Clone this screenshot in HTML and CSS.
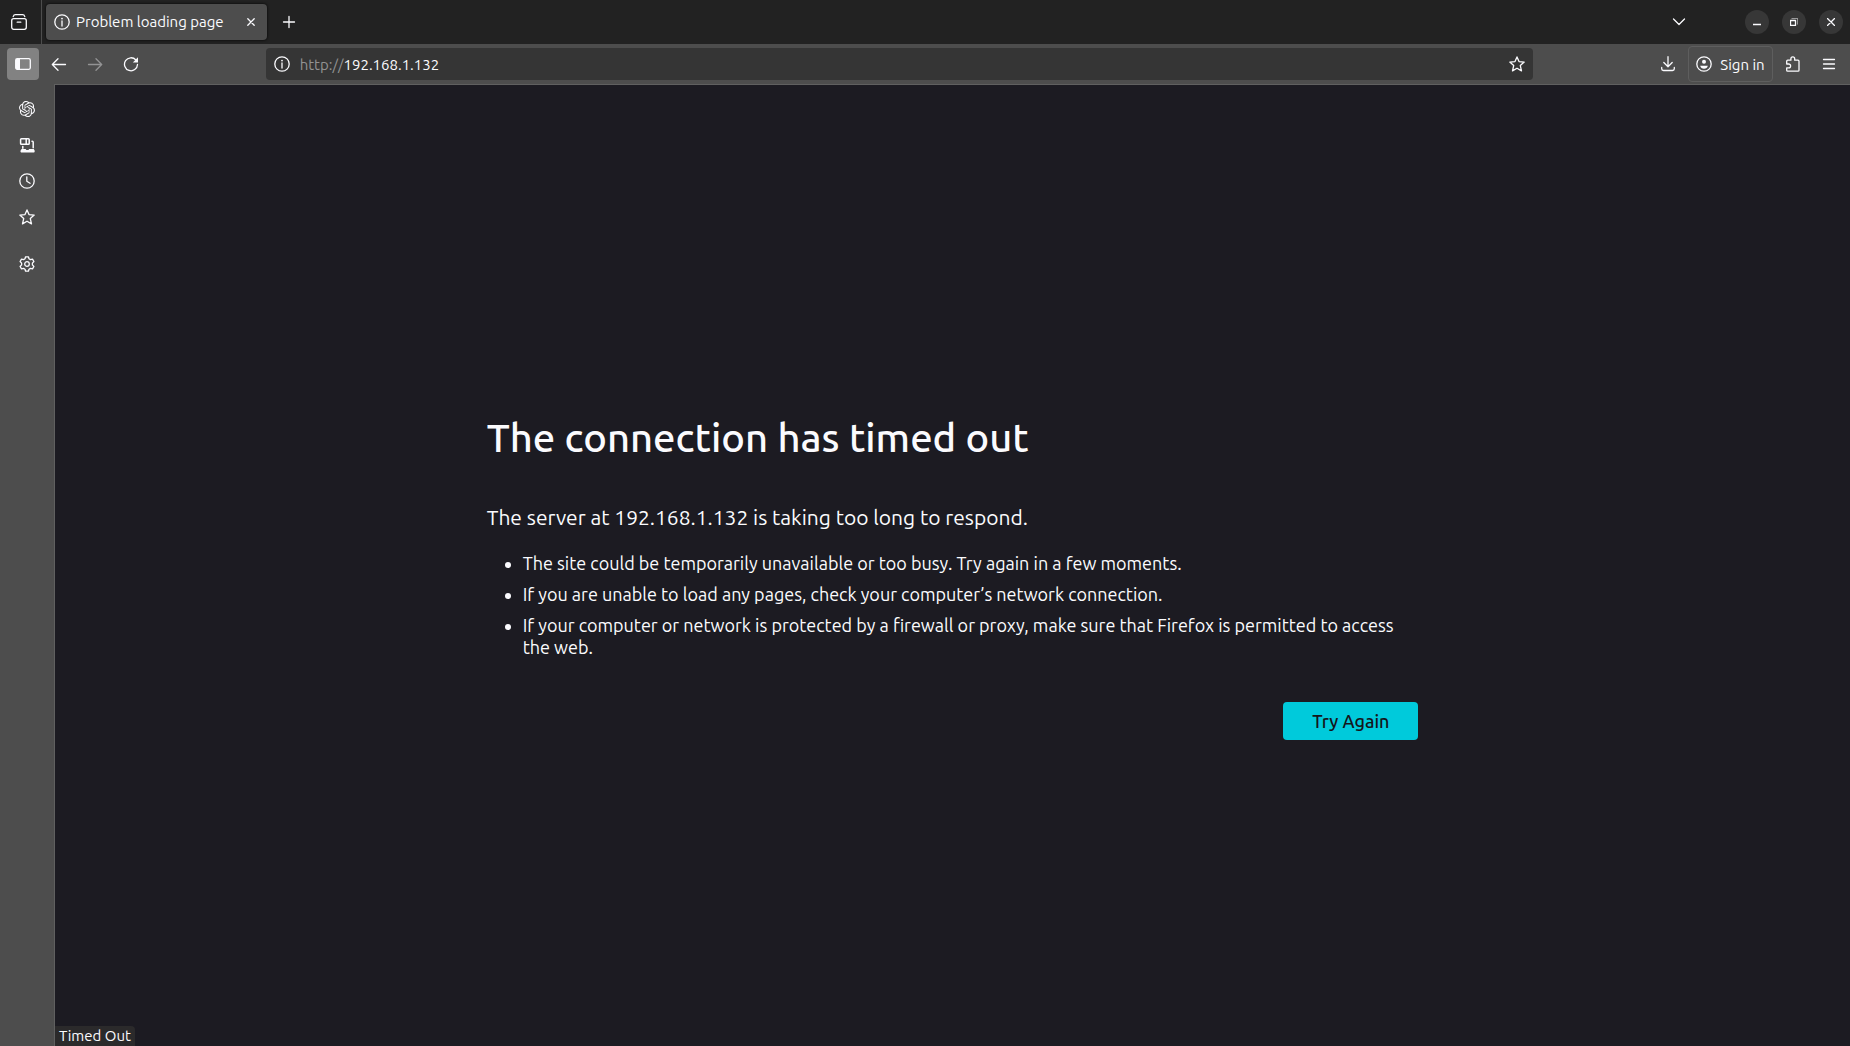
FILE: index.html
```html
<!DOCTYPE html>
<html lang="en">
<head>
<meta charset="utf-8">
<title>Problem loading page</title>
<link rel="stylesheet" href="styles.css">
</head>
<body>
<div class="browser">
  <header class="tabbar">
    <button class="view-button" aria-label="Firefox View">
      <svg class="icon" viewBox="0 0 16 16"><rect x=".7" y="4.7" width="14.6" height="10.6" rx="2"/><path d="M2.2 2.6C2.6 1.2 3.4.7 4.5.7h7c1.100 0 1.900.5 2.300 1.900M6.200 8.200h3.600"/></svg>
    </button>
    <div class="tab">
      <svg class="icon" viewBox="0 0 16 16"><circle cx="8" cy="8" r="7.200"/><path d="M8 7v5"/><circle class="solid" cx="8" cy="4.600" r=".9"/></svg>
      <span class="tab-title">Problem loading page</span>
      <button class="tab-close" aria-label="Close tab"><svg class="icon-small" viewBox="0 0 8 8"><path d="M.8.8l6.400 6.400M7.200.8L.8 7.200"/></svg></button>
    </div>
    <button class="tool" aria-label="New tab"><svg class="icon" viewBox="0 0 16 16"><path d="M8 2.500v11M2.500 8h11"/></svg></button>
    <div class="window-controls">
      <button class="tool tabs-list" aria-label="List all tabs"><svg class="icon" viewBox="0 0 16 16"><path d="M2.500 5L8 10.500 13.500 5"/></svg></button>
      <button class="round" aria-label="Minimize"><svg class="icon-small" viewBox="0 0 8 8"><path d="M0 6.500h8"/></svg></button>
      <button class="round" aria-label="Restore"><svg class="icon-small" viewBox="0 0 8 8"><path d="M.5 2.500h5v5h-5z"/><path class="faint" d="M2 .3h5.700V6"/></svg></button>
      <button class="round" aria-label="Close"><svg class="icon-small" viewBox="0 0 8 8"><path d="M.4.4l7.200 7.200M7.600.4L.4 7.600"/></svg></button>
    </div>
  </header>

  <nav class="toolbar" aria-label="Navigation">
    <button class="tool active" aria-label="Sidebar"><svg class="icon" viewBox="0 0 16 16"><rect x=".7" y="2.700" width="14.600" height="10.600" rx="1.500"/><path class="solid" d="M1 3h4v10H1z"/></svg></button>
    <button class="tool" aria-label="Back"><svg class="icon" viewBox="0 0 16 16"><path d="M14.500 8.500H1.500M7 2.800L1.300 8.500 7 14.200"/></svg></button>
    <button class="tool" aria-label="Forward" disabled><svg class="icon" viewBox="0 0 16 16"><path d="M1.500 8.500h13M9 2.800l5.700 5.700L9 14.200"/></svg></button>
    <button class="tool" aria-label="Reload"><svg class="icon" viewBox="0 0 16 16"><path d="M12.900 4A6.500 6.500 0 1 0 14.500 8.500"/><path class="solid" d="M15 1.200v5.200H9.800z"/></svg></button>
    <div class="spring"></div>
    <div class="urlbar">
      <svg class="icon" viewBox="0 0 16 16"><circle cx="8" cy="8" r="7.200"/><path d="M8 7v5"/><circle class="solid" cx="8" cy="4.600" r=".9"/></svg>
      <div class="url"><label class="scheme" for="address">http://</label><input class="address" id="address" type="text" value="192.168.1.132"></div>
      <button class="bookmark" aria-label="Bookmark this page"><svg class="icon" viewBox="0 0 16 16"><path d="M8 .9l2 4.700 5.200.5-3.900 3.500 1.200 5.300L8 12.200l-4.500 2.700 1.200-5.300L.8 6.100 6 5.600z"/></svg></button>
    </div>
    <div class="spring"></div>
    <button class="tool" aria-label="Downloads"><svg class="icon" viewBox="0 0 16 16"><path d="M8 .7v9.800M3.800 6.500L8 10.700l4.200-4.200M1.700 11.500v1.200c0 1 .8 1.800 1.800 1.800h9c1 0 1.800-.8 1.800-1.800v-1.200"/></svg></button>
    <button class="signin"><svg class="icon" viewBox="0 0 16 16"><circle cx="8" cy="8" r="7.200"/><circle class="solid" cx="8" cy="5.800" r="2"/><path class="solid" d="M4.200 9.800h7.600c-.3 2-1.800 3-3.800 3s-3.500-1-3.800-3z"/></svg><span>Sign in</span></button>
    <button class="tool" aria-label="Extensions"><svg class="icon" viewBox="0 0 16 16"><path d="M1.700 8V5.200c0-.6.4-1 1-1h3.200V2.700a1.900 1.900 0 0 1 3.800 0v1.500H13c.6 0 1 .4 1 1v9c0 .6-.4 1-1 1H2.700c-.6 0-1-.4-1-1v-2.400h2a1.900 1.900 0 0 0 0-3.800z"/></svg></button>
    <button class="tool" aria-label="Menu"><svg class="icon" viewBox="0 0 16 16"><path d="M2.500 3.500h11M2.500 8h11M2.500 12.500h11"/></svg></button>
  </nav>

  <div class="body">
    <aside class="sidebar">
      <button class="side" aria-label="ChatGPT"><svg class="icon" viewBox="0 0 24 24"><path class="solid" d="M22.2819 9.8211a5.9847 5.9847 0 0 0-.5157-4.9108 6.0462 6.0462 0 0 0-6.5098-2.9A6.0651 6.0651 0 0 0 4.9807 4.1818a5.9847 5.9847 0 0 0-3.9977 2.9 6.0462 6.0462 0 0 0 .7427 7.0966 5.98 5.98 0 0 0 .511 4.9107 6.051 6.051 0 0 0 6.5146 2.9001A5.9847 5.9847 0 0 0 13.2599 24a6.0557 6.0557 0 0 0 5.7718-4.2058 5.9894 5.9894 0 0 0 3.9977-2.9001 6.0557 6.0557 0 0 0-.7475-7.0729zm-9.022 12.6081a4.4755 4.4755 0 0 1-2.8764-1.0408l.1419-.0804 4.7783-2.7582a.7948.7948 0 0 0 .3927-.6813v-6.7369l2.02 1.1686a.071.071 0 0 1 .038.052v5.5826a4.504 4.504 0 0 1-4.4945 4.4944zm-9.6607-4.1254a4.4708 4.4708 0 0 1-.5346-3.0137l.142.0852 4.783 2.7582a.7712.7712 0 0 0 .7806 0l5.8428-3.3685v2.3324a.0804.0804 0 0 1-.0332.0615L9.74 19.9502a4.4992 4.4992 0 0 1-6.1408-1.6464zM2.3408 7.8956a4.485 4.485 0 0 1 2.3655-1.9728V11.6a.7664.7664 0 0 0 .3879.6765l5.8144 3.3543-2.0201 1.1685a.0757.0757 0 0 1-.071 0l-4.8303-2.7865A4.504 4.504 0 0 1 2.3408 7.872zm16.5963 3.8558L13.1038 8.364 15.1192 7.2a.0757.0757 0 0 1 .071 0l4.8303 2.7913a4.4944 4.4944 0 0 1-.6765 8.1042v-5.6772a.79.79 0 0 0-.407-.667zm2.0107-3.0231l-.142-.0852-4.7735-2.7818a.7759.7759 0 0 0-.7854 0L9.409 9.2297V6.8974a.0662.0662 0 0 1 .0284-.0615l4.8303-2.7866a4.4992 4.4992 0 0 1 6.6802 4.66zM8.3065 12.863l-2.02-1.1638a.0804.0804 0 0 1-.038-.0567V6.0742a4.4992 4.4992 0 0 1 7.3757-3.4537l-.142.0805L8.704 5.459a.7948.7948 0 0 0-.3927.6813zm1.0976-2.3654l2.602-1.4998 2.6069 1.4998v2.9994l-2.5974 1.4997-2.6067-1.4997Z"/></svg></button>
      <button class="side" aria-label="Synced tabs"><svg class="icon" viewBox="0 0 16 16"><g stroke-width="1.500"><rect x="1.600" y="1.800" width="8.600" height="5.400" rx=".8"/><path d="M7.200 2v5M13 4.300h.3c.5 0 .9.400.9.900v5.600M3.800 9.600v1.600"/></g><path class="solid" d="M2.600 12h4l.8 1h2l.8-1h4.600l.8 1.400c.4 1-.1 2.200-1.200 2.200H2.800c-1.100 0-1.600-1.200-1.200-2.200z"/></svg></button>
      <button class="side" aria-label="History"><svg class="icon" viewBox="0 0 16 16"><circle cx="8" cy="8" r="7.200"/><path d="M7.800 3.800v4.500l3.200 2"/></svg></button>
      <button class="side" aria-label="Bookmarks"><svg class="icon" viewBox="0 0 16 16"><path d="M8 .9l2 4.700 5.200.5-3.900 3.500 1.200 5.300L8 12.200l-4.500 2.700 1.200-5.300L.8 6.100 6 5.600z"/></svg></button>
      <button class="side settings" aria-label="Customize sidebar"><svg class="icon" viewBox="0 0 16 16"><circle cx="8" cy="8" r="2.300"/><path d="M6.600.8h2.800l.6 2 1.400.8 2.100-.5 1.400 2.400-1.500 1.600v1.800l1.500 1.600-1.400 2.400-2.100-.5-1.400.8-.6 2H6.600l-.6-2-1.400-.8-2.100.5-1.400-2.400 1.500-1.600V7.100L1.100 5.500l1.400-2.400 2.100.5L6 2.800z"/></svg></button>
    </aside>
    <main class="page">
      <section class="error">
        <h1>The connection has timed out</h1>
        <p class="lead">The server at 192.168.1.132 is taking too long to respond.</p>
        <ul>
          <li>The site could be temporarily unavailable or too busy. Try again in a few moments.</li>
          <li>If you are unable to load any pages, check your computer’s network connection.</li>
          <li>If your computer or network is protected by a firewall or proxy, make sure that Firefox is permitted to access the web.</li>
        </ul>
        <button class="retry">Try Again</button>
      </section>
      <div class="status" role="status">Timed Out</div>
    </main>
  </div>
</div>
</body>
</html>
```
FILE: styles.css
```css
* { box-sizing: border-box; }
body {
  margin: 0;
  background: #4d4d4d;
  color: #fbfbfe;
  font-family: Ubuntu, "Noto Sans", sans-serif;
  font-size: 15px;
}
button {
  display: flex;
  align-items: center;
  justify-content: center;
  flex: none;
  margin: 0;
  padding: 0;
  border: 0;
  background: none;
  color: inherit;
  font: inherit;
}
.icon, .icon-small {
  flex: none;
  display: block;
  width: 16px;
  height: 16px;
  fill: none;
  stroke: currentColor;
  stroke-width: 1.3;
  stroke-linecap: round;
  stroke-linejoin: round;
}
.icon-small { width: 8px; height: 8px; }
.solid { fill: currentColor; stroke: none; }
.faint { opacity: .5; }

.browser { display: flex; flex-direction: column; min-height: 100vh; }

.tabbar {
  display: flex;
  align-items: center;
  height: 44px;
  padding-right: 7px;
  background: #222;
}
.view-button {
  width: 42px;
  height: 44px;
  padding-right: 3px;
  border-right: 1px solid #4d4d4d;
}
.tab {
  display: flex;
  align-items: center;
  gap: 6px;
  width: 221px;
  height: 36px;
  margin: 0 6px 0 4px;
  padding: 0 8px;
  border-radius: 4px;
  background: #4d4d4d;
  box-shadow: 0 0 3px #000;
}
.tab-title { flex: 1; line-height: 16px; white-space: nowrap; }
.tab-close { width: 16px; height: 24px; }
.tool { width: 32px; height: 32px; border-radius: 4px; }
.tool:disabled { opacity: .4; }
.window-controls { display: flex; align-items: center; gap: 13px; margin-left: auto; }
.tabs-list { margin-right: 37px; }
.round { width: 24px; height: 24px; border-radius: 50%; background: #373737; }

.toolbar {
  display: flex;
  align-items: center;
  gap: 4px;
  height: 40px;
  padding: 0 5px 0 7px;
  background: #4d4d4d;
}
.active { background: #828282; }
.spring { flex: 112 1 0; }
.urlbar {
  display: flex;
  align-items: center;
  flex: 1267 1 0;
  gap: 10px;
  height: 32px;
  padding: 0 8px;
  border-radius: 4px;
  background: #353535;
}
.url { display: flex; align-items: center; flex: 1; }
.scheme { color: #929292; }
.address {
  flex: 1;
  min-width: 0;
  padding: 0;
  border: 0;
  outline: 0;
  background: none;
  color: inherit;
  font: inherit;
}
.signin {
  gap: 8px;
  width: 85px;
  height: 36px;
  border: 1px solid #5e5e5e;
  border-radius: 4px;
}

.body { display: flex; flex: 1; }
.sidebar {
  display: flex;
  flex-direction: column;
  align-items: center;
  gap: 4px;
  width: 54px;
  padding-top: 9px;
}
.side { width: 32px; height: 32px; }
.settings { margin-top: 11px; }
.page {
  position: relative;
  display: flex;
  align-items: center;
  justify-content: center;
  flex: 1;
  border: solid #606060;
  border-width: 1px 0 0 1px;
  background: #1c1b22;
}
.error { width: 51.9%; padding-top: 22px; }
h1 { margin: 0 0 41px; font-size: 40px; font-weight: 500; line-height: 48px; }
.lead { margin: 0 0 21px; font-size: 21px; line-height: 28px; }
ul { margin: 0 0 44px; padding: 0 0 0 36px; font-size: 18px; line-height: 22px; }
li { margin-bottom: 9px; }
.retry {
  width: 135px;
  height: 38px;
  margin-left: auto;
  border-radius: 4px;
  background: #00cadb;
  color: #15141a;
  font-size: 18px;
  font-weight: 500;
}
.status {
  position: absolute;
  left: 0;
  bottom: 0;
  padding: 0 4px;
  border-radius: 0 4px 0 0;
  background: #2b2a2b;
  line-height: 20px;
}
```
